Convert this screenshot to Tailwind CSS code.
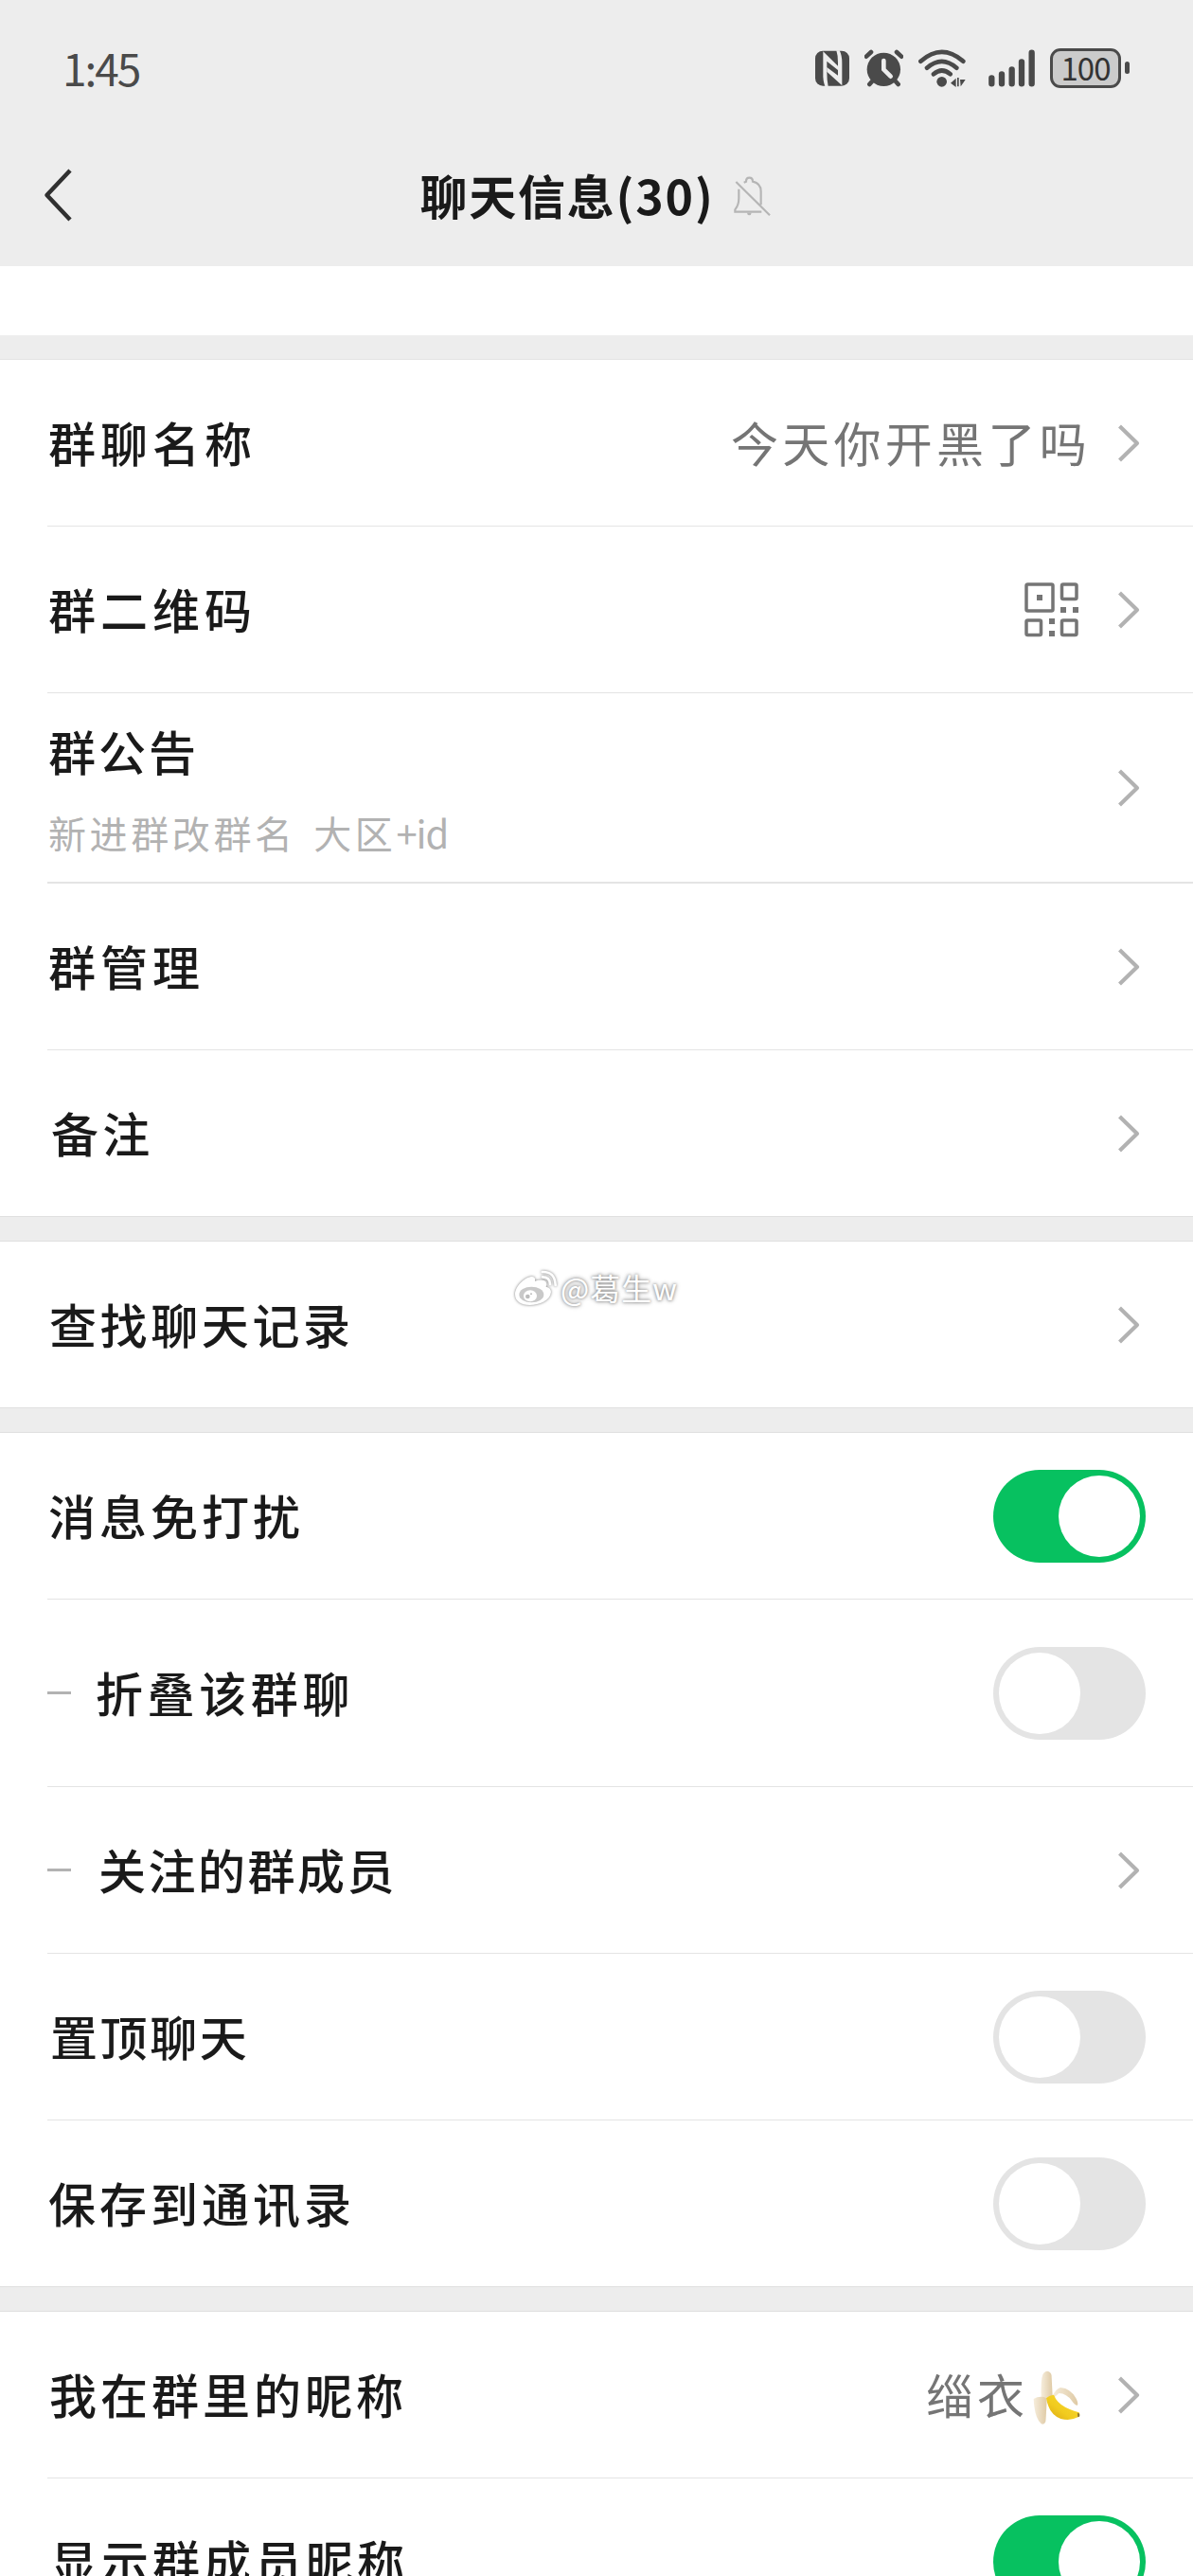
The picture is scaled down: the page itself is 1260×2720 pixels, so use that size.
<!DOCTYPE html>
<html lang="zh-CN">

<head>
    <title>聊天信息</title>
    <meta charset="UTF-8">
    <meta name="viewport" content="width=device-width, initial-scale=1.0">
    <script src="https://cdn.jsdelivr.net/npm/@tailwindcss/browser@4"></script>
</head>

<body class="bg-[#ededed] font-['Noto_Sans_CJK_SC',sans-serif] text-[#1a1a1a]">
    <!-- Shared icons -->
    <svg class="hidden">
        <symbol id="chevron" viewBox="0 0 24 42">
            <path d="M2.5 3 21 21 2.5 39" fill="none" stroke="#b2b2b2" stroke-width="4.2" stroke-linejoin="round" />
        </symbol>
    </svg>

    <div class="relative h-[2720px] w-[1260px] overflow-hidden">
        <!-- Status bar -->
        <div class="flex h-[145px] items-center justify-between pl-[66px] pr-[67px]">
            <span class="pb-[3px] text-[46px] leading-none tracking-[-2px] text-[#4a4a4a]">1:45</span>
            <div class="flex text-[#4a4a4a]">
                <svg class="mr-4 h-[45px] w-9" viewBox="66 60 108 135">
                    <rect x="66" y="71" width="108" height="111" rx="24" fill="currentColor" />
                    <path d="M91 73 138 119V132L103 104V138Q103 165 107 183H97Q90 165 91 140Z" fill="#ededed" />
                    <path d="M151 181 103 137V123L138 149V108Q138 85 133 70H143Q151 85 151 110Z" fill="#ededed" />
                </svg>
                <svg class="mr-4 h-[45px] w-[41px]" viewBox="222 60 123 135">
                    <circle cx="283" cy="130" r="53" fill="currentColor" />
                    <path d="M228 89 243 75M324 75 339 89M246 168 238 177M321 168 329 177" stroke="currentColor" stroke-width="14" stroke-linecap="round" />
                    <path d="M283 102V130L305 152" fill="none" stroke="#ededed" stroke-width="14" stroke-linecap="round" />
                </svg>
                <svg class="mr-6 h-[45px] w-[50px]" viewBox="392 60 150 135" fill="none" stroke="currentColor" stroke-width="14" stroke-linecap="round">
                    <path d="M399 104Q466 45 534 104M419 125Q466 84 513 125M440 145Q466 122 493 145" />
                    <circle cx="466" cy="169" r="16" fill="currentColor" stroke="none" />
                    <path d="M494 173 511 158V186ZM515 156H520V184H515ZM524 162H541L526 184Z" fill="currentColor" stroke="none" />
                </svg>
                <svg class="mr-4 h-[45px] w-[49px]" viewBox="612 60 147 135" stroke="currentColor" stroke-width="19" stroke-linecap="round">
                    <path d="M622 157V175M654 145V175M686 130V175M717 106V175M749 77V175" />
                </svg>
                <div class="mt-[-2px] flex items-center">
                    <div class="flex h-[42px] w-[75px] items-center justify-center rounded-[11px] border-[3px] border-[#4a4a4a] bg-[#cbcbcb] pb-[1px] text-[33px] leading-[34px] tracking-[-1px] text-[#333]">100</div>
                    <div class="ml-1 h-[13px] w-[5px] rounded-full bg-[#4a4a4a]"></div>
                </div>
            </div>
        </div>

        <!-- Title bar -->
        <div class="relative flex h-[136px] items-start justify-center">
            <svg class="absolute left-[45px] top-[33px] h-[56px] w-8" viewBox="0 0 32 56">
                <path d="M29 2 4.5 28 29 54" fill="none" stroke="#303030" stroke-width="4.5" stroke-linejoin="round" />
            </svg>
            <h1 class="mt-[32px] whitespace-nowrap text-[50px] font-bold leading-[56px] tracking-[1.8px]">聊天信息(30)</h1>
            <svg class="ml-[20px] mr-0.5 mt-[41px] h-[43px] w-10" viewBox="1064 82 120 129" fill="none" stroke="#b5b5b5" stroke-width="6.5">
                <path d="M1071 100 1178 206M1080 123V152Q1080 174 1068 188V195H1152M1150 173V130Q1150 105 1124 99Q1124 87 1113 87Q1103 87 1103 99L1096 102" />
                <path d="M1106 198H1120Q1119 206 1113 206Q1107 206 1106 198Z" fill="#b5b5b5" stroke="none" />
            </svg>
        </div>

        <div class="h-[73px] bg-white"></div>

        <!-- Group info -->
        <div class="mt-[25px] border-t border-[#e4e4e4] bg-white pl-[50px] text-[50px] leading-[60px] tracking-[4.3px]">
            <div class="flex h-44 items-center border-b border-[#e4e4e4] pr-[56px]">
                <span class="flex-1 pb-1 pl-px font-medium tracking-[5px]">群聊名称</span>
                <span class="pb-1 text-[#757575]">今天你开黑了吗</span>
                <svg class="ml-7 h-[42px] w-6"><use href="#chevron" /></svg>
            </div>
            <div class="flex h-44 items-center border-b border-[#e4e4e4] pr-[56px]">
                <span class="flex-1 pb-1 pl-px font-medium tracking-[5px]">群二维码</span>
                <svg class="h-[58px] w-[58px]" viewBox="0 0 58 58" fill="none" stroke="#757575" stroke-width="3.5">
                    <rect x="2" y="2" width="28" height="28" rx="1.5" />
                    <rect x="39.5" y="2" width="15.5" height="15.5" rx="1.5" />
                    <rect x="2" y="40" width="15.5" height="15.5" rx="1.5" />
                    <rect x="39.5" y="40" width="15.5" height="15.5" rx="1.5" />
                    <path d="M13 13h6v6h-6zM38 26h6v6h-6zM51 26h6v6h-6zM26 38h6v6h-6zM26 51h6v6h-6z" fill="#757575" stroke="none" />
                </svg>
                <svg class="ml-10 h-[42px] w-6"><use href="#chevron" /></svg>
            </div>
            <div class="flex h-[201px] items-center border-b-2 border-[#e4e4e4] pr-[56px]">
                <div class="flex-1 pl-px pt-0.5">
                    <div class="font-medium tracking-[3px]">群公告</div>
                    <div class="mt-[32px] text-[40px] leading-[50px] tracking-[3.6px] text-[#b2b2b2] [word-spacing:6px]">新进群改群名 大区<span class="tracking-[-1px]">+id</span></div>
                </div>
                <svg class="h-[42px] w-6"><use href="#chevron" /></svg>
            </div>
            <div class="flex h-44 items-center border-b border-[#e4e4e4] pr-[56px]">
                <span class="flex-1 pb-1 pl-px font-medium tracking-[5px]">群管理</span>
                <svg class="h-[42px] w-6"><use href="#chevron" /></svg>
            </div>
            <div class="flex h-[175px] items-center pr-[56px]">
                <span class="flex-1 pb-1 pl-1 font-medium">备注</span>
                <svg class="h-[42px] w-6"><use href="#chevron" /></svg>
            </div>
        </div>

        <div class="h-[27px] border-y border-[#e0e0e0]"></div>

        <!-- Search history -->
        <div class="relative flex h-[175px] items-center bg-white pl-[50px] pr-[56px] text-[50px] leading-[60px] tracking-[3.6px]">
            <span class="flex-1 pb-1 pl-0.5 font-medium">查找聊天记录</span>
            <svg class="h-[42px] w-6"><use href="#chevron" /></svg>
            <!-- Watermark -->
            <div class="absolute left-[542px] top-[27px] flex items-center">
                <svg class="h-11 w-[50px] drop-shadow-[0_0_1.5px_#777]" viewBox="126 234 150 132">
                    <path d="M132 320C132 295 162 266 184 264Q198 264 195 278Q218 270 229 279Q234 286 230 296Q246 300 246 313C243 340 210 354 178 354C150 353 132 341 132 320Z" fill="#fff" />
                    <ellipse cx="184" cy="321" rx="39" ry="25" fill="#c9c9c9" />
                    <ellipse cx="180" cy="325" rx="21" ry="18" fill="#fff" />
                    <circle cx="172" cy="327" r="7" fill="#bbb" />
                    <circle cx="183" cy="319" r="3" fill="#bbb" />
                    <path d="M218 249Q258 247 260 291M219 265Q242 265 243 288" fill="none" stroke="#fff" stroke-width="8" stroke-linecap="round" />
                </svg>
                <span class="pb-0.5 text-[32px] leading-10 tracking-[1px] text-white [text-shadow:0_0_3px_#888,0_0_5px_#999]">@葛生w</span>
            </div>
        </div>

        <div class="h-[27px] border-y border-[#e0e0e0]"></div>

        <!-- Chat settings -->
        <div class="bg-white pl-[50px] text-[50px] font-medium leading-[60px] tracking-[4px]">
            <div class="flex h-44 items-center border-b border-[#e4e4e4] pr-[50px]">
                <span class="flex-1 pb-1 pl-px">消息免打扰</span>
                <div class="flex h-[98px] w-[161px] justify-end rounded-full bg-[#07c160] p-1.5"><div class="w-[86px] rounded-full bg-white"></div></div>
            </div>
            <div class="flex h-[198px] items-center border-b border-[#e4e4e4] pr-[50px]">
                <div class="mr-[26px] h-[3px] w-[25px] bg-[#b2b2b2]"></div>
                <span class="flex-1 pb-1 tracking-[4.6px]">折叠该群聊</span>
                <div class="flex h-[98px] w-[161px] rounded-full bg-[#e4e4e4] p-1.5"><div class="w-[86px] rounded-full bg-white"></div></div>
            </div>
            <div class="flex h-44 items-center border-b border-[#e4e4e4] pr-[56px]">
                <div class="mr-[29px] h-[3px] w-[25px] bg-[#b2b2b2]"></div>
                <span class="flex-1 pb-1 tracking-[2.5px]">关注的群成员</span>
                <svg class="h-[42px] w-6"><use href="#chevron" /></svg>
            </div>
            <div class="flex h-44 items-center border-b border-[#e4e4e4] pr-[50px]">
                <span class="flex-1 pb-1 pl-[3px] tracking-[2.6px]">置顶聊天</span>
                <div class="flex h-[98px] w-[161px] rounded-full bg-[#e4e4e4] p-1.5"><div class="w-[86px] rounded-full bg-white"></div></div>
            </div>
            <div class="flex h-[175px] items-center pr-[50px]">
                <span class="flex-1 pb-1 pl-px">保存到通讯录</span>
                <div class="flex h-[98px] w-[161px] rounded-full bg-[#e4e4e4] p-1.5"><div class="w-[86px] rounded-full bg-white"></div></div>
            </div>
        </div>

        <div class="h-[27px] border-y border-[#e0e0e0]"></div>

        <!-- Nickname -->
        <div class="bg-white pl-[50px] text-[50px] leading-[60px] tracking-[4px]">
            <div class="flex h-44 items-center border-b border-[#e4e4e4] pr-[56px]">
                <span class="flex-1 pb-1 pl-0.5 font-medium">我在群里的昵称</span>
                <span class="pb-1 text-[#757575]">缁衣</span>
                <svg class="ml-[5px] mt-1.5 h-[58px] w-[50px]" viewBox="455 789 150 174">
                    <defs>
                        <linearGradient id="flesh" x1="0" x2="1">
                            <stop offset="0" stop-color="#f6eddc" />
                            <stop offset="1" stop-color="#dfcaa5" />
                        </linearGradient>
                        <linearGradient id="peel" x1="1" y1="0" x2="0" y2="1">
                            <stop offset="0" stop-color="#f9dc3b" />
                            <stop offset=".6" stop-color="#f1cb1e" />
                            <stop offset="1" stop-color="#d9a516" />
                        </linearGradient>
                    </defs>
                    <path d="M481 872Q479 820 486 802Q493 789 504 792Q515 796 514 811L517 870Q498 880 481 872Z" fill="url(#flesh)" />
                    <path d="M516 872Q526 848 542 843Q575 846 592 878Q599 892 596 899Q588 900 578 885Q562 862 537 861L518 878Z" fill="url(#flesh)" />
                    <path d="M457 879Q476 867 499 876Q497 926 495 951Q491 962 481 958Q460 940 457 879Z" fill="url(#flesh)" />
                    <path d="M497 876Q508 867 521 866Q535 905 601 922Q606 931 597 937Q573 950 543 942Q505 928 497 876Z" fill="url(#peel)" />
                    <path d="M596 923Q606 925 602 935L597 937Z" fill="#8b7338" />
                </svg>
                <svg class="ml-[39px] h-[42px] w-6"><use href="#chevron" /></svg>
            </div>
            <div class="flex h-44 items-center pr-[50px]">
                <span class="flex-1 pb-1 pl-[3px] font-medium">显示群成员昵称</span>
                <div class="flex h-[98px] w-[161px] justify-end rounded-full bg-[#07c160] p-1.5"><div class="w-[86px] rounded-full bg-white"></div></div>
            </div>
        </div>
    </div>
</body>

</html>
